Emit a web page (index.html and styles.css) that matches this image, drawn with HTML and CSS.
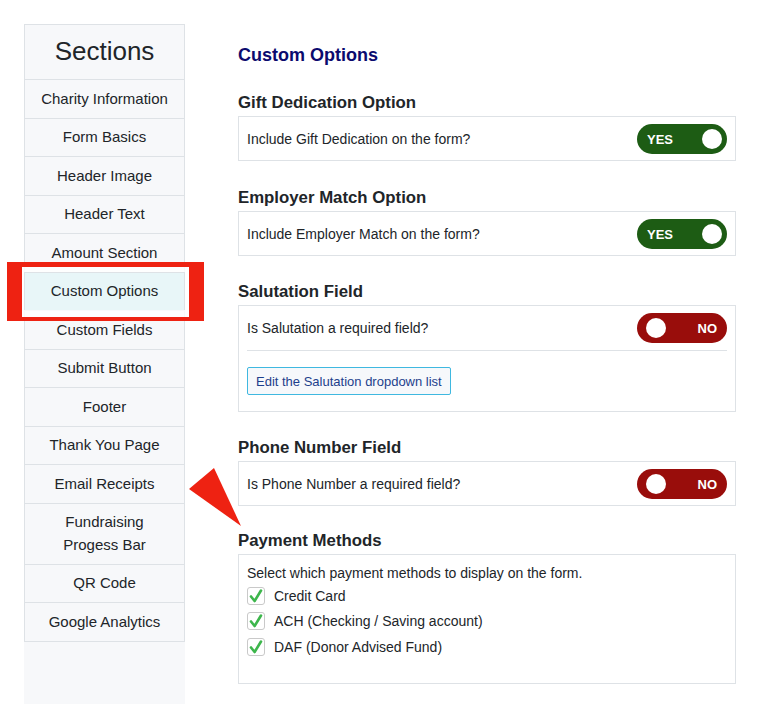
FILE: index.html
```html
<!DOCTYPE html>
<html lang="en">
<head>
    <meta charset="UTF-8">
    <meta name="viewport" content="width=device-width, initial-scale=1.0">
    <title>Custom Options - Form Settings</title>
    <link rel="stylesheet" href="styles.css">
</head>
<body>
    <div class="page">
        <aside class="sidebar">
            <div class="sections-title">Sections</div>
            <ul class="section-list">
                <li>Charity Information</li>
                <li>Form Basics</li>
                <li>Header Image</li>
                <li>Header Text</li>
                <li>Amount Section</li>
                <li class="active">Custom Options</li>
                <li>Custom Fields</li>
                <li>Submit Button</li>
                <li>Footer</li>
                <li>Thank You Page</li>
                <li>Email Receipts</li>
                <li>Fundraising<br>Progess Bar</li>
                <li>QR Code</li>
                <li>Google Analytics</li>
            </ul>
        </aside>

        <main class="content">
            <h2 class="page-title">Custom Options</h2>

            <h3 class="option-title">Gift Dedication Option</h3>
            <div class="option-box first">
                <div class="option-row">
                    <span>Include Gift Dedication on the form?</span>
                    <span class="toggle on"><span class="toggle-label">YES</span><span class="knob"></span></span>
                </div>
            </div>

            <h3 class="option-title">Employer Match Option</h3>
            <div class="option-box">
                <div class="option-row">
                    <span>Include Employer Match on the form?</span>
                    <span class="toggle on"><span class="toggle-label">YES</span><span class="knob"></span></span>
                </div>
            </div>

            <h3 class="option-title">Salutation Field</h3>
            <div class="option-box split">
                <div class="option-row">
                    <span>Is Salutation a required field?</span>
                    <span class="toggle off"><span class="knob"></span><span class="toggle-label">NO</span></span>
                </div>
                <button type="button" class="edit-btn">Edit the Salutation dropdown list</button>
            </div>

            <h3 class="option-title">Phone Number Field</h3>
            <div class="option-box phone">
                <div class="option-row">
                    <span>Is Phone Number a required field?</span>
                    <span class="toggle off"><span class="knob"></span><span class="toggle-label">NO</span></span>
                </div>
            </div>

            <h3 class="option-title">Payment Methods</h3>
            <div class="option-box payments">
                <p class="payments-intro">Select which payment methods to display on the form.</p>
                <label class="pay-row">
                    <span class="check"><svg viewBox="0 0 18 18" width="18" height="18"><path d="M4 9.5 L7.6 14 L14 3.5" fill="none" stroke="#3db64c" stroke-width="2.6" stroke-linecap="round" stroke-linejoin="round"/></svg></span>
                    Credit Card
                </label>
                <label class="pay-row">
                    <span class="check"><svg viewBox="0 0 18 18" width="18" height="18"><path d="M4 9.5 L7.6 14 L14 3.5" fill="none" stroke="#3db64c" stroke-width="2.6" stroke-linecap="round" stroke-linejoin="round"/></svg></span>
                    ACH (Checking / Saving account)
                </label>
                <label class="pay-row">
                    <span class="check"><svg viewBox="0 0 18 18" width="18" height="18"><path d="M4 9.5 L7.6 14 L14 3.5" fill="none" stroke="#3db64c" stroke-width="2.6" stroke-linecap="round" stroke-linejoin="round"/></svg></span>
                    DAF (Donor Advised Fund)
                </label>
            </div>
        </main>
    </div>

    <!-- annotation marks drawn on top of the screenshot -->
    <div class="annot-frame"><div class="annot-inner"></div></div>
    <svg class="annot-arrow" width="782" height="704" viewBox="0 0 782 704">
        <polygon points="189,489 214,468 241,526" fill="#ee2212"/>
    </svg>
</body>
</html>
```

FILE: styles.css
```css
body {
    margin: 0;
    font-family: "Liberation Sans", Arial, sans-serif;
    color: #212529;
    background-color: #fff;
    position: relative;
    overflow: hidden;
    height: 704px;
}

.page {
    display: flex;
    align-items: flex-start;
    padding: 24px 0 0 24px;
}

/* left column */
.sidebar {
    width: 161px;
    min-height: 690px;
    background-color: #f7f8fa;
    flex-shrink: 0;
}

.sections-title {
    border: 1px solid #dee2e6;
    font-size: 26px;
    line-height: 31px;
    text-align: center;
    padding: 11px 0 12px;
}

.section-list {
    list-style: none;
    margin: 0;
    padding: 0;
    border-left: 1px solid #dee2e6;
    border-right: 1px solid #dee2e6;
}

.section-list li {
    font-size: 15px;
    line-height: 22.5px;
    padding: 7.5px 0;
    text-align: center;
    border-bottom: 1px solid #dee2e6;
}

.section-list li.active {
    background-color: #e8f6f8;
}

/* right column */
.content {
    margin-left: 53px;
    width: 498px;
    padding-top: 20px;
}

.page-title {
    margin: 0 0 26px;
    font-size: 18px;
    line-height: 22px;
    color: #0b0a6e;
}

.option-title {
    margin: 0 0 3px;
    font-size: 16.8px;
    line-height: 21px;
    color: #212529;
}

.option-box {
    border: 1px solid #dee2e6;
    padding: 7px 8px 6px;
    margin-bottom: 25px;
    font-size: 14px;
}

.option-box.first {
    margin-bottom: 26px;
}

.option-box.phone {
    margin-bottom: 24px;
}

.option-row {
    display: flex;
    justify-content: space-between;
    align-items: center;
}

.option-box.split {
    padding-bottom: 16px;
}

.option-box.split .option-row {
    padding-bottom: 7px;
    border-bottom: 1px solid #dee2e6;
}

.toggle {
    width: 90px;
    height: 30px;
    box-sizing: border-box;
    border-radius: 15px;
    display: flex;
    align-items: center;
    justify-content: space-between;
    color: #fff;
    font-size: 13px;
    font-weight: bold;
}

.toggle.on {
    background-color: #1d5c14;
    padding: 0 5px 0 10px;
}

.toggle.off {
    background-color: #990d0b;
    padding: 0 10px 0 9px;
}

.knob {
    width: 20px;
    height: 20px;
    border-radius: 50%;
    background-color: #fff;
}

.edit-btn {
    margin-top: 16px;
    height: 28px;
    padding: 0 8px;
    border: 1px solid #3fb8e0;
    border-radius: 2px;
    background-color: #f6f8fb;
    color: #1d3f8c;
    font-family: "Liberation Sans", Arial, sans-serif;
    font-size: 13px;
}

.option-box.payments {
    padding: 9px 8px 23px;
}

.payments-intro {
    margin: 0;
    line-height: 19px;
}

.pay-row {
    display: flex;
    align-items: center;
    height: 25.5px;
    gap: 9px;
}

.check {
    width: 18px;
    height: 18px;
    box-sizing: border-box;
    border: 1px solid #c9c9c9;
    border-radius: 3px;
    background-color: #fff;
    display: flex;
    align-items: center;
    justify-content: center;
}

.check svg {
    flex-shrink: 0;
}

/* annotations */
.annot-frame {
    position: absolute;
    left: 7px;
    top: 262px;
    width: 197px;
    height: 59px;
    box-sizing: border-box;
    border-style: solid;
    border-color: #ee2212;
    border-width: 5px 15px 4px 15px;
}

.annot-inner {
    height: 100%;
    box-sizing: border-box;
    border-style: solid;
    border-color: rgba(255, 255, 255, 0.8);
    border-width: 5px 4px 7px 2px;
}

.annot-arrow {
    position: absolute;
    left: 0;
    top: 0;
    pointer-events: none;
}
```
